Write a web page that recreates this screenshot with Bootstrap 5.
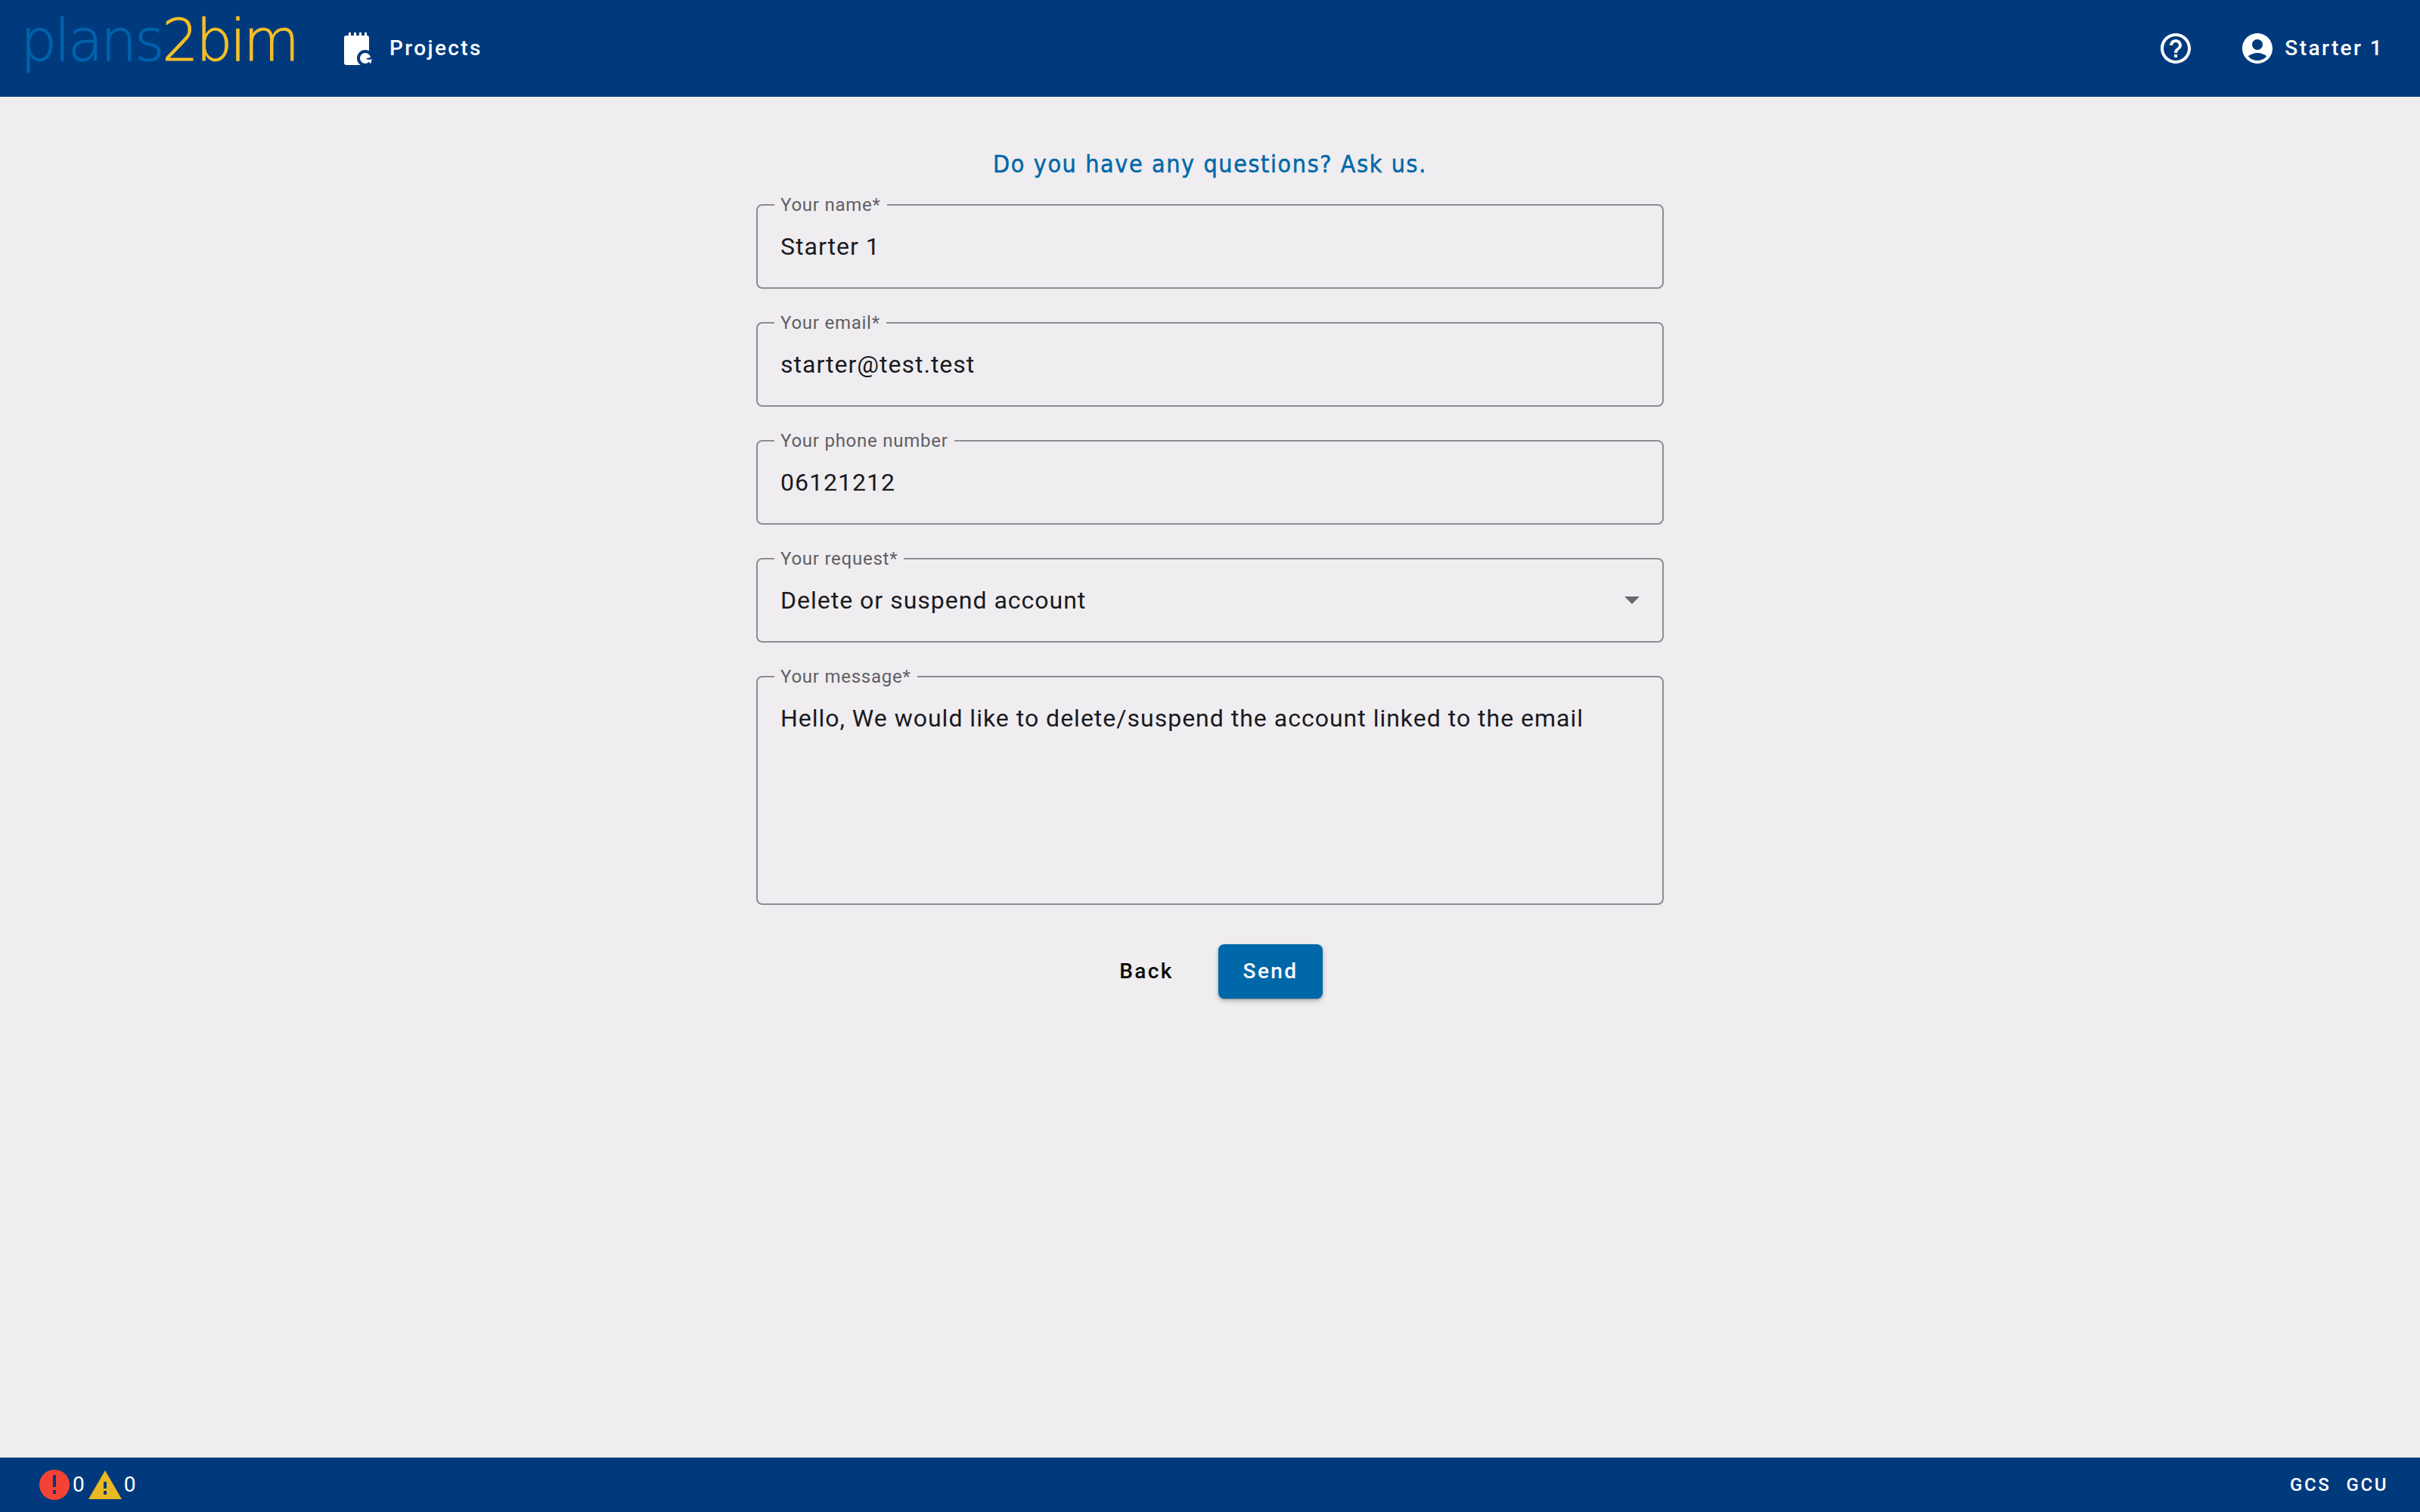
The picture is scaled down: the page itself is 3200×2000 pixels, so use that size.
<!DOCTYPE html>
<html lang="en">
<head>
<meta charset="utf-8">
<title>plans2bim</title>
<link href="https://cdn.jsdelivr.net/npm/bootstrap@5.3.0/dist/css/bootstrap.min.css" rel="stylesheet">
<style>
html,body{height:100%}
body{background:#efedf0;font-family:Roboto,"Liberation Sans",sans-serif;color:#1a1a1e}
.app-shell{height:100vh}
.top-bar{height:128px;background:#003a7d;color:#fff;padding:0 48px 0 32px}
.brand-logo{width:362px;height:128px;display:block;margin-right:61px;overflow:visible}
.brand-logo text{font-family:"DejaVu Sans",sans-serif;font-weight:200;font-size:76px;letter-spacing:-3.3px;stroke-width:.9px}
.bar-link{font-size:28px;font-weight:500;letter-spacing:2.4px;color:#fff;text-decoration:none}
.nav-proj{gap:22px}
.main-area{padding-top:64px}
.form-col{width:1200px}
.form-title{font-family:"DejaVu Sans Condensed","DejaVu Sans",sans-serif;font-size:32px;font-weight:400;letter-spacing:1.6px;-webkit-text-stroke:.5px #0068a8;color:#0068a8;text-align:center;line-height:48px;margin:0 0 29px;padding-top:1px}
.out-field{position:relative;margin-bottom:44px}
.out-field label{position:absolute;left:24px;top:-14px;padding:0 8px;background:#efedf0;font-size:24px;line-height:30px;letter-spacing:.75px;color:#5f5e64}
.out-field .form-control,.out-field .form-select{height:112px;background:transparent;border:2px solid #8d8c90;border-radius:8px;padding:0 30px;font-size:32px;letter-spacing:1px;color:#1a1a1e;box-shadow:none;background-image:none}
.out-field textarea.form-control{height:303px;padding:31px 30px;line-height:46px;resize:none}
.field-caret{position:absolute;right:32px;top:51px;width:20px;height:10px;pointer-events:none}
.form-actions{margin-top:52px;padding-right:6px}
.act-btn{height:72px;font-size:28px;font-weight:500;letter-spacing:2.4px;border-radius:8px;border:0;padding:0}
.act-back{width:142px;color:#0a0a0a;background:transparent}
.act-send{width:138px;background:#0068a8;color:#fff;box-shadow:0 3px 6px rgba(0,0,0,.25),0 1px 2px rgba(0,0,0,.2)}
.act-send:hover,.act-send:active{background:#0068a8;color:#fff}
.bottom-bar{height:72px;background:#003a7d;color:#fff;padding:0 42px 0 52px;font-size:28px;letter-spacing:1px}
.legal-link{font-size:24px;font-weight:500;letter-spacing:2.6px;color:#fff;text-decoration:none}
.legal-links{gap:20px}
.help-icon{margin-right:2px}
.last-count{margin-left:3px}
</style>
</head>
<body>
<div class="app-shell d-flex flex-column">
  <nav class="top-bar d-flex align-items-center flex-shrink-0">
    <svg class="brand-logo" viewBox="0 0 362 128" role="img" aria-label="plans2bim">
      <text x="-5" y="80" fill="#0062ac" stroke="#0062ac">plans<tspan fill="#f5c026" stroke="#f5c026">2bim</tspan></text>
    </svg>
    <a href="#" class="bar-link nav-proj d-flex align-items-center">
      <svg width="38" height="46" viewBox="0 0 38 46" aria-hidden="true">
        <path d="M3 6h3V3a1.500 1.500 0 0 1 3 0v3h4V3a1.500 1.500 0 0 1 3 0v3h4V3a1.500 1.500 0 0 1 3 0v3h4V3a1.500 1.500 0 0 1 3 0v3a3 3 0 0 1 3 3v36H3a3 3 0 0 1-3-3V9a3 3 0 0 1 3-3z" fill="#fff"/>
        <circle cx="28" cy="36" r="11" fill="#003a7d"/>
        <path d="M28 29a7 7 0 1 0 6 10.600L28.800 36.200 35 35a7 7 0 0 0-7-6z" fill="#fff"/>
        <path d="M31 38l6-.5-2 6z" fill="#fff"/>
      </svg>
      <span>Projects</span>
    </a>
    <div class="ms-auto d-flex align-items-center">
      <svg class="help-icon" width="48" height="48" viewBox="0 0 24 24" fill="#fff" aria-hidden="true"><path d="M11 18h2v-2h-2v2zm1-16C6.480 2 2 6.480 2 12s4.480 10 10 10 10-4.480 10-10S17.520 2 12 2zm0 18c-4.410 0-8-3.590-8-8s3.590-8 8-8 8 3.590 8 8-3.590 8-8 8zm0-14c-2.210 0-4 1.790-4 4h2c0-1.100.9-2 2-2s2 .9 2 2c0 2-3 1.750-3 5h2c0-2.250 3-2.500 3-5 0-2.210-1.790-4-4-4z"/></svg>
      <a href="#" class="bar-link d-flex align-items-center" style="margin-left:58px">
        <svg width="48" height="48" viewBox="0 0 24 24" fill="#fff" aria-hidden="true" style="margin-right:12px"><path d="M12 2C6.480 2 2 6.480 2 12s4.480 10 10 10 10-4.480 10-10S17.520 2 12 2zm0 4c1.930 0 3.500 1.570 3.500 3.500S13.930 13 12 13s-3.500-1.570-3.500-3.500S10.070 6 12 6zm0 14c-2.030 0-4.430-.82-6.140-2.880C7.550 15.800 9.680 15 12 15s4.450.8 6.140 2.120C16.430 19.180 14.030 20 12 20z"/></svg>
        <span>Starter 1</span>
      </a>
    </div>
  </nav>

  <main class="main-area flex-grow-1 d-flex justify-content-center">
    <form class="form-col">
      <h1 class="form-title">Do you have any questions? Ask us.</h1>
      <div class="out-field"><label for="f1">Your name*</label><input id="f1" class="form-control" value="Starter 1"></div>
      <div class="out-field"><label for="f2">Your email*</label><input id="f2" class="form-control" value="starter@test.test"></div>
      <div class="out-field"><label for="f3">Your phone number</label><input id="f3" class="form-control" value="06121212"></div>
      <div class="out-field"><label for="f4">Your request*</label>
        <select id="f4" class="form-select"><option>Delete or suspend account</option></select>
        <svg class="field-caret" viewBox="0 0 20 10" aria-hidden="true"><path d="M0 0h20L10 10z" fill="#69686d"/></svg>
      </div>
      <div class="out-field"><label for="f5">Your message*</label><textarea id="f5" class="form-control">Hello, We would like to delete/suspend the account linked to the email</textarea></div>
      <div class="form-actions d-flex justify-content-center gap-4">
        <button type="button" class="btn act-btn act-back">Back</button>
        <button type="button" class="btn act-btn act-send">Send</button>
      </div>
    </form>
  </main>

  <footer class="bottom-bar d-flex align-items-center flex-shrink-0">
    <svg width="40" height="40" viewBox="0 0 40 40" aria-hidden="true"><circle cx="20" cy="20" r="20" fill="#f44336"/><path d="M18 7h4v16h-4zM18 27h4v5h-4z" fill="#003a7d"/></svg>
    <span class="ms-1">0</span>
    <svg class="ms-1" width="44" height="38" viewBox="0 0 44 38" aria-hidden="true"><path d="M22 0l22 38H0z" fill="#e8b923"/><path d="M20 15h4v9h-4zM20 27h4v5h-4z" fill="#003a7d"/></svg>
    <span class="last-count">0</span>
    <div class="ms-auto d-flex legal-links">
      <a href="#" class="legal-link">GCS</a>
      <a href="#" class="legal-link">GCU</a>
    </div>
  </footer>
</div>
<script src="https://cdn.jsdelivr.net/npm/bootstrap@5.3.0/dist/js/bootstrap.bundle.min.js"></script>
</body>
</html>
